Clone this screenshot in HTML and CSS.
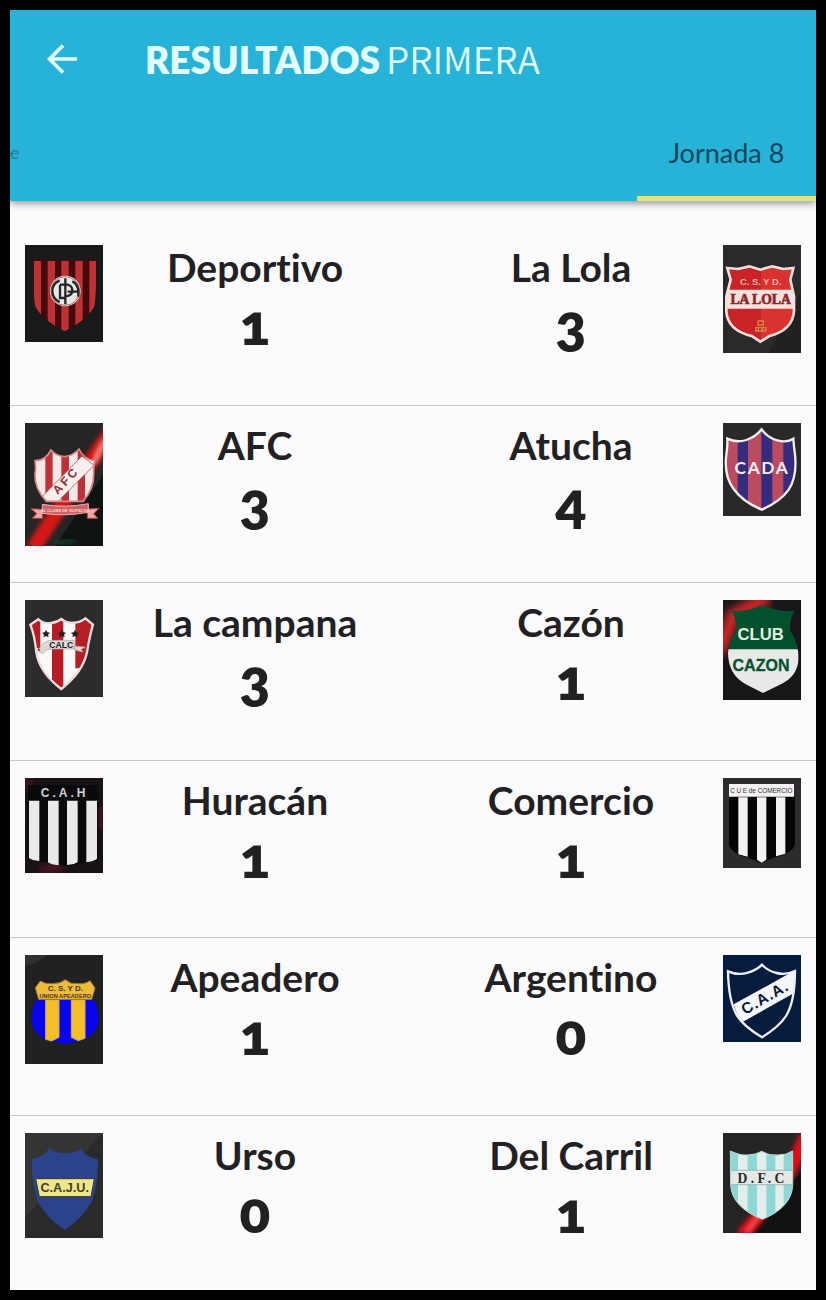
FILE: index.html
```html
<!DOCTYPE html>
<html lang="es">
<head>
<meta charset="utf-8">
<meta name="viewport" content="width=device-width, initial-scale=1">
<title>Resultados Primera</title>
<link rel="stylesheet" href="styles.css">
</head>
<body>
<div class="app">
  <header class="header">
    <div class="bar">
      <button class="back" type="button" aria-label="Volver">
        <svg viewBox="0 0 30 30" width="30" height="30" fill="none" stroke="currentColor" stroke-width="3.600"><path d="M30 15H3M16 1.500L2.500 15l13.500 13.500"/></svg>
      </button>
      <h1 class="title"><strong>RESULTADOS</strong><span class="division">PRIMERA</span></h1>
    </div>
    <nav class="tabs">
      <a class="tab-previous" href="#anterior">e</a>
      <a class="tab" href="#jornada-8" aria-current="page">Jornada 8</a>
    </nav>
  </header>
  <main>
    <ul class="matches">
      <li class="match">
        <svg class="crest" viewBox="30 30 234 291" role="img" aria-label="Escudo Deportivo">
          <defs><clipPath id="c1"><path d="M54 74H244C244 130 243 185 238 214Q218 254 149 289Q80 254 61 214C55 185 54 130 54 74Z"/></clipPath></defs>
          <path fill="#191a1b" d="M30 30h234v291H30z"/>
          <g clip-path="url(#c1)"><path fill="#45090b" d="M50 70h200v225H50z"/><path fill="#bd3235" d="M57 78h21v220H57zM98 78h22v220H98zM139 78h22v220h-22zM181 78h22v220h-22zM223 78h20v220h-20z"/></g>
          <circle cx="151" cy="168" r="46" fill="#e9e7e4"/><circle cx="151" cy="168" r="43" fill="none" stroke="#8c3530" stroke-width="2"/>
          <g fill="none" stroke="#222628" stroke-width="7"><path d="M134 137Q112 145 112 168T134 201M135 149V189H149M151 130V208M135 149h22q15 3 15 18t-20 17M172 139q18 9 18 31v15M158 170h32"/></g>
        </svg>
        <div class="team"><h2 class="name">Deportivo</h2><p class="score">1</p></div>
        <div class="team"><h2 class="name">La Lola</h2><p class="score">3</p></div>
        <svg class="crest" viewBox="33 30 234 324" role="img" aria-label="Escudo La Lola">
          <defs><clipPath id="c2"><path id="lola" d="M46 99L78 102L112 94L145 104L181 94L214 102L244 99L235 134L246 184V228Q242 286 172 303L145 320L119 303Q46 286 43 228V184L56 134Z"/></clipPath></defs>
          <path fill="#292b2a" d="M33 30h234v324H33z"/><path fill="#202222" d="M267 170v184H170z"/>
          <g clip-path="url(#c2)"><path fill="#c92327" d="M35 90h110v240H35z"/><path fill="#d9322f" d="M145 90h110v240H145z"/><path fill="#f4e3dd" d="M35 164h220v57H35z"/></g>
          <use href="#lola" fill="none" stroke="#f5dfdd" stroke-width="8"/>
          <text class="sans-bold" x="146" y="150" font-size="28" fill="#edb5ae" text-anchor="middle">C. S. Y D.</text>
          <text class="serif-bold" x="146" y="206" font-size="41" fill="#8f252b" stroke="#8f252b" stroke-width="2" text-anchor="middle">LA LOLA</text>
          <path fill="none" stroke="#d58745" stroke-width="4" d="M138 258h16v12h-16zM131 278h30v10h-30zM139 278v10M151 278v10"/>
        </svg>
      </li>
      <li class="match">
        <svg class="crest" viewBox="30 24 234 369" role="img" aria-label="Escudo AFC">
          <defs>
            <clipPath id="c3"><path id="afc" d="M60 137Q91 138 108 105Q123 123 149 125Q175 122 192 102Q207 134 239 137Q235 160 236 178Q237 222 204 259H94Q58 221 60 178Q64 159 60 137Z"/></clipPath>
            <filter id="f1"><feGaussianBlur stdDeviation="8"/></filter>
          </defs>
          <path fill="#232625" d="M30 24h234v369H30z"/>
          <path fill="#101313" d="M264 180v213H120z"/>
          <path fill="none" stroke="#d91519" stroke-width="44" filter="url(#f1)" d="M290 50Q210 160 55 400"/><path fill="none" stroke="#ffb2aa" stroke-width="12" filter="url(#f1)" d="M270 75L235 145"/>
          <path fill="none" stroke="#174a20" stroke-width="12" filter="url(#f1)" d="M115 388L180 376"/>
          <g clip-path="url(#c3)"><path fill="#f5e9e7" d="M50 95h200v170H50z"/><path fill="#bf313a" d="M91 100h22v165H91zM139 100h23v165h-23zM188 100h22v165h-22z"/><path fill="#f9eeeb" stroke="#963a3d" stroke-width="2" d="M80 246L201 123L237 151L115 273z"/></g>
          <use href="#afc" fill="none" stroke="#d6888b" stroke-width="5"/>
          <text class="sans-bold" transform="translate(128 240) rotate(-47)" font-size="36" fill="#852c35" letter-spacing="8">AFC</text>
          <path fill="#e9a7a5" stroke="#b74047" stroke-width="3" d="M48 281l35 2v27H52l13-14zM252 280l-35 2v28h31l-12-14z"/><path fill="#ce6266" stroke="#f1b1ad" stroke-width="3" d="M82 268Q150 280 220 266V292Q150 305 82 295Z"/>
          <text class="sans-bold" x="151" y="290" font-size="12" fill="#f9d3cc" text-anchor="middle">EL CLUBE DE SUIPACHA</text>
        </svg>
        <div class="team"><h2 class="name">AFC</h2><p class="score">3</p></div>
        <div class="team"><h2 class="name">Atucha</h2><p class="score">4</p></div>
        <svg class="crest" viewBox="33 24 234 279" role="img" aria-label="Escudo CADA">
          <defs><clipPath id="c4"><path id="cada" d="M46 71Q72 84 103 75Q132 65 149 43Q166 68 196 76Q225 84 244 71Q246 98 249 119Q256 184 230 224Q205 260 149 284Q92 260 65 222Q35 182 43 119Q47 94 46 71Z"/></clipPath></defs>
          <path fill="#282929" d="M33 24h234v279H33z"/>
          <g clip-path="url(#c4)"><path fill="#bd4b60" d="M35 40h222v250H35z"/><path fill="#342d7d" d="M77 40h31v250H77zM148 40h33v250h-33zM214 40h35v250h-35z"/></g>
          <use href="#cada" fill="none" stroke="#f4edf1" stroke-width="7"/>
          <text class="lato-bold" x="150" y="177" font-size="52" letter-spacing="5" fill="#f4edf2" text-anchor="middle">CADA</text>
        </svg>
      </li>
      <li class="match">
        <svg class="crest" viewBox="30 30 234 291" role="img" aria-label="Escudo La Campana">
          <defs><clipPath id="c5"><path id="calc" d="M46 104L70 88Q87 103 109 99Q127 97 139 87Q155 101 176 98Q195 98 211 85L234 104Q224 137 216 187Q204 246 139 297Q73 247 64 187Q59 136 46 104Z"/></clipPath></defs>
          <path fill="#2b2d2d" d="M30 30h234v291H30z"/>
          <g clip-path="url(#c5)"><path fill="#fbf8f8" d="M40 80h200v225H40z"/><path fill="#b51e25" d="M42 85h34v90H60zM111 85h34v220h-34zM181 85h50l-8 150h-42z"/></g>
          <use href="#calc" fill="none" stroke="#efdddd" stroke-width="7"/>
          <path fill="#ddd9d6" stroke="#aaa2a0" stroke-width="2" d="M70 183Q80 155 106 151H179V177H105Q90 179 83 191ZM179 168l31 3-8 15-25-7z"/>
          <text class="sans-bold" x="139" y="173" font-size="26" fill="#252323" text-anchor="middle">CALC</text>
          <path id="star" fill="#211f22" d="M93 120l4 7 8 1-6 6 2 8-8-4-8 4 2-8-6-6 8-1z"/><use href="#star" x="48"/><use href="#star" x="87"/>
          <path fill="#a4252c" d="M69 175l8 5-9 4zM206 173l-9 7 11 4z"/>
        </svg>
        <div class="team"><h2 class="name">La campana</h2><p class="score">3</p></div>
        <div class="team"><h2 class="name">Cazón</h2><p class="score">1</p></div>
        <svg class="crest" viewBox="33 30 234 300" role="img" aria-label="Escudo Cazón">
          <defs><filter id="f2"><feGaussianBlur stdDeviation="12"/></filter><clipPath id="c6"><path d="M60 62Q105 67 151 45Q202 68 248 62Q230 92 235 123Q256 153 259 190Q266 257 202 285L153 309L104 284Q50 258 48 190Q50 151 73 123Q73 91 60 62Z"/></clipPath></defs>
          <path fill="#171719" d="M33 30h234v300H33z"/><path fill="none" stroke="#cd2525" stroke-width="42" filter="url(#f2)" d="M20 188L64 77L168 22"/>
          <g clip-path="url(#c6)"><path fill="#03512c" d="M40 35h225v145H40z"/><path fill="#e8eae8" d="M40 178h225v140H40z"/></g>
          <text class="sans-bold" x="146" y="151" font-size="50" fill="#e1eee2" text-anchor="middle">CLUB</text>
          <text class="sans-bold" x="147" y="243" font-size="48" fill="#07522f" stroke="#07522f" stroke-width="1" text-anchor="middle">CAZON</text>
        </svg>
      </li>
      <li class="match">
        <svg class="crest" viewBox="30 24 234 285" role="img" aria-label="Escudo Huracán">
          <path fill="#171216" d="M30 24h234v285H30z"/><path fill="none" stroke="#5e151c" stroke-width="22" filter="url(#f2)" d="M35 24v35M257 112v65M75 302l72-15"/>
          <path fill="#090a0c" d="M39 45H250V270L157 289L41 268Z"/>
          <path fill="#e9e8ea" d="M42 92h31v181q-23-2-31-9zM99 92h32v194q-23-2-32-9zM156 92h32v184q-8 7-32 9zM214 92h32v174q-10 9-32 10z"/>
          <text class="sans-bold" x="149" y="82" font-size="36" letter-spacing="9" fill="#d4d0d0" text-anchor="middle">C.A.H</text>
        </svg>
        <div class="team"><h2 class="name">Huracán</h2><p class="score">1</p></div>
        <div class="team"><h2 class="name">Comercio</h2><p class="score">1</p></div>
        <svg class="crest" viewBox="33 24 234 270" role="img" aria-label="Escudo Comercio">
          <path fill="#2c2b2d" d="M33 24h234v270H33z"/><path fill="#040507" d="M51 79H249V224Q239 251 188 262L149 279L108 263Q60 253 51 224Z"/>
          <path fill="#f3f1f1" d="M51 42h195v38H51zM79 82h28v178l-28-7zM135 82h28v187l-14 9-14-9zM192 82h28v169l-28 8z"/>
          <text class="sans" x="148" y="68" font-size="19" fill="#353337" text-anchor="middle">C U E de COMERCIO</text>
        </svg>
      </li>
      <li class="match">
        <svg class="crest" viewBox="30 30 234 327" role="img" aria-label="Escudo Apeadero">
          <path fill="#202121" d="M30 30h234v327H30z"/><path fill="#303131" d="M30 30h65Q75 52 30 63z"/>
          <path fill="#0a05ed" d="M65 165H235Q251 185 251 222Q251 261 207 283L151 298L93 283Q49 261 49 222Q49 185 65 165Z"/>
          <path fill="#f3bf24" stroke="#c5a978" stroke-width="3" d="M92 165h40v112l-22 11-18-5zM169 165h41v115l-20 7-21-10z"/>
          <path fill="#edbd37" stroke="#ad7433" stroke-width="3" d="M61 128L76 108Q92 119 113 116Q137 116 151 104Q167 119 189 116Q211 118 225 107L240 129L230 163H71Z"/>
          <text class="sans-bold" x="151" y="138" font-size="24" fill="#433523" text-anchor="middle">C. S. Y D.</text><text class="sans-bold" x="151" y="158" font-size="17" fill="#4b321d" text-anchor="middle">UNION APEADERO</text>
        </svg>
        <div class="team"><h2 class="name">Apeadero</h2><p class="score">1</p></div>
        <div class="team"><h2 class="name">Argentino</h2><p class="score">0</p></div>
        <svg class="crest" viewBox="33 30 234 261" role="img" aria-label="Escudo Argentino">
          <defs><clipPath id="c7"><path id="caa" d="M48 79Q77 92 108 83Q135 75 150 59Q166 77 194 84Q222 91 249 78C249 138 240 184 222 213Q203 244 150 277Q96 244 76 213C56 181 49 137 48 79Z"/></clipPath></defs>
          <path fill="#061c3e" d="M33 30h234v261H33z"/><path clip-path="url(#c7)" fill="#f4f6f9" d="M65 178L260 70V136L85 235z"/><use href="#caa" fill="none" stroke="#edf1f6" stroke-width="7"/>
          <text class="sans-bold" transform="translate(99 210) rotate(-30)" font-size="46" letter-spacing="3" fill="#071b37">C.A.A.</text>
        </svg>
      </li>
      <li class="match">
        <svg class="crest" viewBox="30 22 234 315" role="img" aria-label="Escudo Urso">
          <path fill="#292a2b" d="M30 22h234v315H30z"/><path fill="#343434" d="M30 22h234L30 275z"/>
          <path fill="#2c438b" d="M50 101Q94 91 101 68Q122 83 150 82Q181 83 198 69Q204 91 249 101C249 148 242 205 229 230Q206 274 149 313Q92 274 69 229C56 198 50 148 50 101Z"/>
          <path fill="#efe68b" stroke="#32382f" stroke-width="3" d="M62 159H238L228 213H73Z"/><text class="sans-bold" x="149" y="200" font-size="38" fill="#403d25" text-anchor="middle">C.A.J.U.</text>
        </svg>
        <div class="team"><h2 class="name">Urso</h2><p class="score">0</p></div>
        <div class="team"><h2 class="name">Del Carril</h2><p class="score">1</p></div>
        <svg class="crest" viewBox="33 22 234 300" role="img" aria-label="Escudo Del Carril">
          <defs><clipPath id="c8"><path id="dfc" d="M55 76Q84 90 106 88Q131 88 149 77Q172 91 197 88Q222 89 242 76V179Q239 245 151 281Q61 245 56 180Z"/></clipPath></defs>
          <path fill="#242424" d="M33 22h234v300H33z"/><path fill="#101112" d="M267 140v182H110z"/><path fill="none" stroke="#df1117" stroke-width="40" filter="url(#f1)" d="M280 30Q240 155 90 330"/><path fill="none" stroke="#ff7976" stroke-width="9" filter="url(#f1)" d="M155 250L103 320"/>
          <g clip-path="url(#c8)"><path fill="#e3eeeb" d="M50 70h200v220H50z"/><path fill="#8dd8d5" d="M55 70h23v220H55zM107 70h28v220h-28zM163 70h27v220h-27zM215 70h29v220h-29z"/><path fill="#e4e9e6" stroke="#83a4a0" stroke-width="2" d="M50 134h200v43H50z"/></g>
          <use href="#dfc" fill="none" stroke="#b8d8d4" stroke-width="3"/><text class="serif-bold" x="152" y="171" font-size="41" letter-spacing="10" fill="#242c2c" text-anchor="middle">D.F.C</text>
        </svg>
      </li>
    </ul>
  </main>
</div>
</body>
</html>
```
FILE: styles.css
```css
* { box-sizing: border-box; }
body {
  margin: 0;
  padding: 10px;
  background: #000;
  color: #212124;
  font-family: Lato, "Open Sans", sans-serif;
  font-variant-ligatures: none;
}
.app { background: #fbfafc; overflow: hidden; }
.header {
  background: #26b3d7;
  box-shadow: 0 2px 8px rgba(0, 0, 0, .45);
}
.bar {
  display: flex;
  align-items: center;
  height: 97px;
  padding-left: 32px;
}
.back {
  display: flex;
  padding: 5px;
  border: 0;
  background: none;
  color: #e2ffff;
}
.title {
  display: flex;
  align-items: baseline;
  gap: 6px;
  margin: 0 0 0 63px;
  font-size: 37px;
  line-height: 44px;
  font-weight: 400;
  color: #e2ffff;
}
.title strong { font-weight: 800; }
.division { font-family: "Noto Sans CJK SC", "Noto Sans", sans-serif; font-weight: 350; font-size: 37px; }
.tabs { display: flex; justify-content: space-between; height: 94px; }
.tab, .tab-previous { color: #15465b; font-size: 27px; line-height: 91px; text-decoration: none; }
.tab { width: 179px; border-bottom: 5px solid #dbe583; text-align: center; }
.tab-previous { font-size: 18px; color: #217f99; }
.matches { margin: 0; padding: 27px 0 0; list-style: none; }
.match {
  display: grid;
  grid-template-columns: 78px 1fr 1fr 78px;
  align-items: start;
  min-height: 178px;
  padding: 17px 15px 0;
  border-bottom: 1px solid #c9c8ca;
}
.match:nth-child(even) { min-height: 177px; }
.match:last-child { min-height: 174px; border-bottom: 0; }
.crest { display: block; width: 100%; height: auto; }
.team { text-align: center; }
.team:nth-child(2) { margin-right: 6px; }
.team:nth-child(3) { margin-left: 6px; }
.name { margin: 0; font-size: 39px; line-height: 44px; font-weight: 700; }
.score { margin: 4px 0 0; font-size: 57px; line-height: 60px; font-weight: 800; font-variant-numeric: oldstyle-nums; }
.sans { font-family: "Liberation Sans", sans-serif; }
.sans-bold { font-family: "Liberation Sans", sans-serif; font-weight: 700; }
.serif-bold { font-family: "Liberation Serif", serif; font-weight: 700; }
.lato-bold { font-family: Lato, sans-serif; font-weight: 700; }
```
